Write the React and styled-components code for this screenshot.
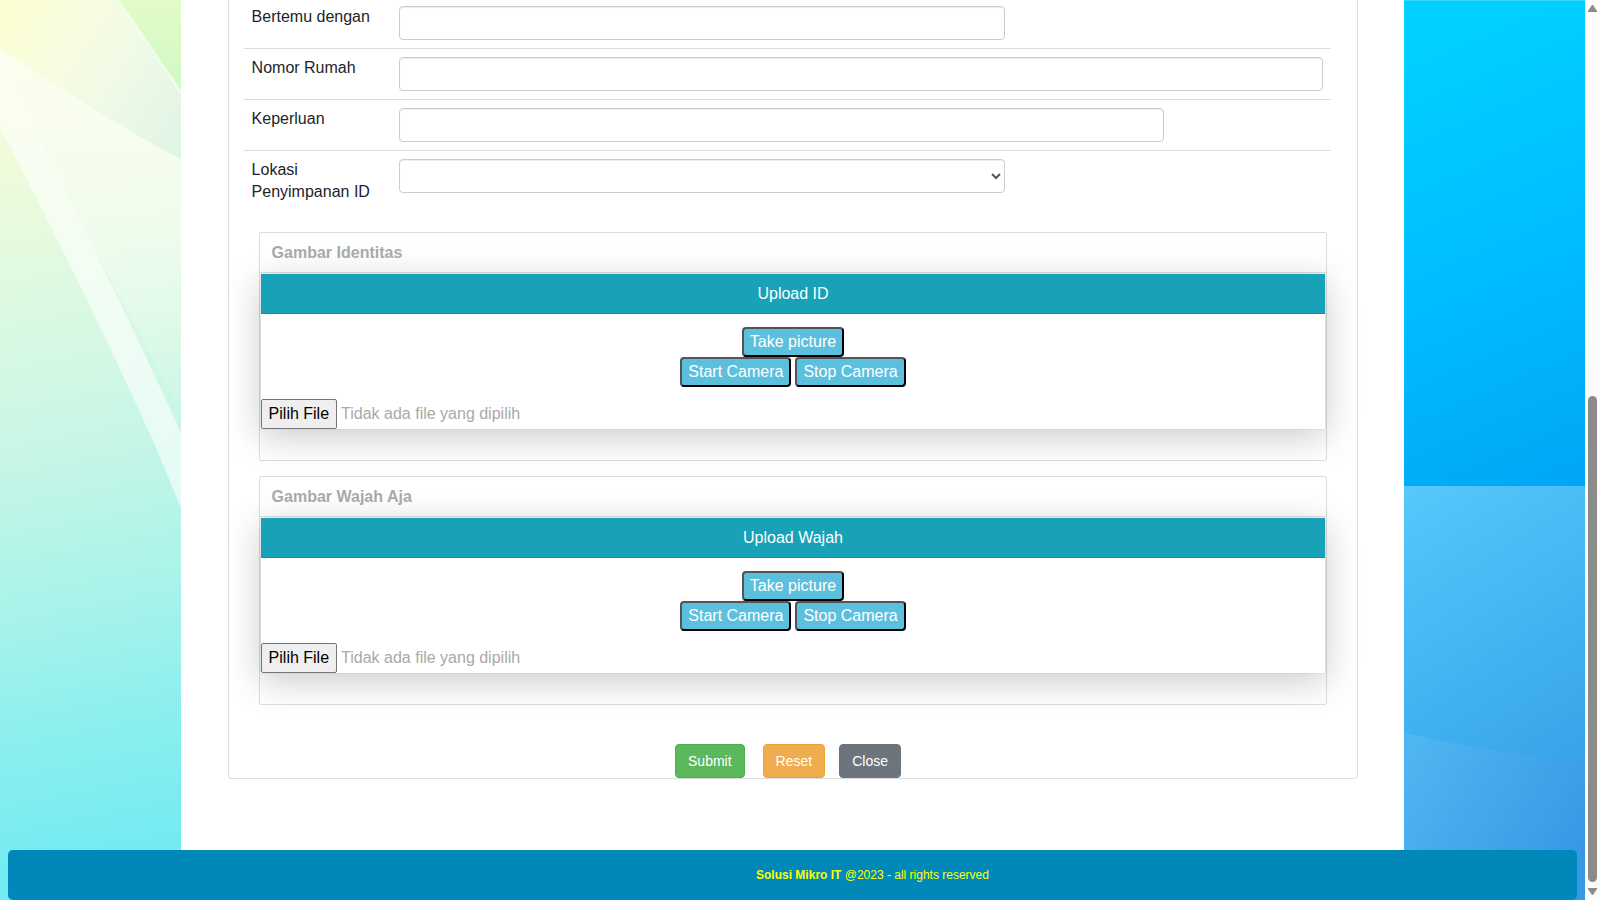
import React from "react";
import styled, { createGlobalStyle } from "styled-components";

const GlobalStyle = createGlobalStyle`
  *, *::before, *::after {
    box-sizing: border-box;
  }
  body {
    margin: 0;
    font-family: "Liberation Sans", Arial, sans-serif;
    font-size: 16px;
    line-height: 22px;
    color: #212529;
  }
  button, input, select {
    font-family: inherit;
  }
`;

const Shell = styled.div`
  display: grid;
  grid-template-columns: minmax(0, 1fr) 15px;
  min-height: 100vh;
`;

const Backdrop = styled.svg`
  grid-area: 1 / 1;
  width: 100%;
  height: 100%;
  min-height: 0;
  contain: size;
`;

const Page = styled.div`
  grid-area: 1 / 1;
  z-index: 1;
  display: flex;
  flex-direction: column;
  padding: 0 8px;
`;

const Sheet = styled.main`
  flex: 1;
  width: 78%;
  margin: 0 auto;
  padding: 0 46px 71px 47px;
  background: #fff;
`;

const Panel = styled.form`
  border: 1px solid #ddd;
  border-top: 0;
  border-radius: 0 0 4px 4px;
`;

const Fields = styled.div`
  padding: 0 26px 0 15px;
`;

const Field = styled.div`
  display: grid;
  grid-template-columns: 131px 1fr;
  column-gap: 16px;
  padding: 8px;
  border-top: 1px solid #ddd;

  &:first-child {
    padding-top: 6px;
    border-top: 0;
  }
`;

const Row = styled.div`
  display: flex;
  margin: 0 -15px;
`;

const Col = styled.div`
  width: calc(100% * ${(props) => props.$span} / 12);
  padding: 0 15px;
`;

const Input = styled.input`
  display: block;
  width: 100%;
  height: 34px;
  padding: 6px 12px;
  font-size: 14px;
  color: #555;
  background: #fff;
  border: 1px solid #ccc;
  border-radius: 4px;
  box-shadow: inset 0 1px 1px rgba(0, 0, 0, 0.075);
`;

const Cards = styled.div`
  display: flex;
  flex-direction: column;
  gap: 15px;
  padding: 21px 30px 39px;
`;

const Card = styled.section`
  padding-bottom: 30px;
  border: 1px solid #ddd;
  border-radius: 2px;
  color: #a9a9a9;
`;

const CardTitle = styled.h3`
  margin: 0;
  padding: 9px 12px 8px;
  font-size: 16px;
  line-height: 22px;
  border-bottom: 1px solid #ddd;
`;

const Uploader = styled.div`
  border: 1px solid rgba(0, 0, 0, 0.04);
  border-radius: 2px;
  background: #fff;
  background-clip: padding-box;
  box-shadow: 0 8px 36px rgba(0, 0, 0, 0.2);
`;

const UploaderTitle = styled.div`
  padding: 9px 12px 8px;
  text-align: center;
  color: #fff;
  background: #17a2b8;
  border-bottom: 1px solid rgba(0, 0, 0, 0.12);
`;

const Camera = styled.div`
  display: flex;
  flex-direction: column;
  align-items: center;
  padding: 13px 0 12px;
`;

const CameraRow = styled.div`
  display: flex;
  gap: 4px;
`;

const CameraButton = styled.button`
  height: 30px;
  padding: 0 6px;
  font-size: 16px;
  line-height: 22px;
  color: #fff;
  background: #5bc0de;
  border: 2px outset #000;
  border-radius: 4px;
`;

const FileRow = styled.div`
  display: flex;
  align-items: center;
  gap: 4px;
`;

const FileInput = styled.input`
  position: absolute;
  width: 1px;
  height: 1px;
  overflow: hidden;
  opacity: 0;
`;

const FileButton = styled.label`
  padding: 3px 7px;
  color: #000;
  background: #efefef;
  border: 1px solid #767676;
  border-radius: 2px;
`;

const Actions = styled.div`
  display: flex;
  justify-content: center;
  gap: 14px;
  padding-right: 10px;
`;

const tones = {
  success: ["#5cb85c", "#4cae4c"],
  warning: ["#f0ad4e", "#eea236"],
  secondary: ["#6c757d", "#6c757d"],
};

const Button = styled.button`
  padding: 6px 12px;
  font-size: 14px;
  line-height: 20px;
  color: #fff;
  background: ${(props) => tones[props.$tone][0]};
  border: 1px solid ${(props) => tones[props.$tone][1]};
  border-radius: 4px;

  &:first-child {
    margin-right: 4px;
  }
`;

const Footer = styled.footer`
  height: 50px;
  padding: 14px 0 14px 160px;
  font-size: 12px;
  text-align: center;
  color: #ff0;
  background: #0088b8;
  border-radius: 5px;
`;

const Scroll = styled.div`
  display: flex;
  flex-direction: column;
  align-items: center;
  justify-content: space-between;
  padding: 5px 0;
  background: #fcfcfc;
`;

const Track = styled.div`
  flex: 1;
  display: flex;
  align-items: flex-end;
  padding: 6px 0;
`;

const Thumb = styled.div`
  width: 9px;
  height: calc(56% + 2px);
  border-radius: 5px;
  background: #8b8b8b;
`;

const fields = [
  { id: "bertemu", label: "Bertemu dengan", span: 8 },
  { id: "nomor", label: "Nomor Rumah", span: 12 },
  { id: "keperluan", label: "Keperluan", span: 10 },
  { id: "lokasi", label: "Lokasi Penyimpanan ID", span: 8, select: true },
];

const Wallpaper = () => (
  <Backdrop viewBox="0 0 1585 900" preserveAspectRatio="none" aria-hidden="true">
    <defs>
      <linearGradient id="mint" gradientUnits="userSpaceOnUse" x1="0" y1="30" x2="160" y2="850">
        <stop offset="0" stopColor="#fbfed8" />
        <stop offset="0.18" stopColor="#edfbdc" />
        <stop offset="0.35" stopColor="#daf9e2" />
        <stop offset="0.5" stopColor="#c8f6e6" />
        <stop offset="0.68" stopColor="#aaf3ea" />
        <stop offset="0.84" stopColor="#8cefee" />
        <stop offset="1" stopColor="#72ebf3" />
      </linearGradient>
      <linearGradient id="petal" gradientUnits="userSpaceOnUse" x1="0" y1="20" x2="180" y2="140">
        <stop offset="0" stopColor="#fbfed2" />
        <stop offset="0.3" stopColor="#f8fde0" />
        <stop offset="0.6" stopColor="#f0fae6" />
        <stop offset="1" stopColor="#e0f5e6" />
      </linearGradient>
      <linearGradient id="haze" x1="0" y1="0" x2="0" y2="1">
        <stop offset="0" stopColor="#fff" stopOpacity="0.6" />
        <stop offset="0.5" stopColor="#fff" stopOpacity="0.4" />
        <stop offset="1" stopColor="#fff" stopOpacity="0" />
      </linearGradient>
      <linearGradient id="leaf" x1="0" y1="0" x2="0" y2="1">
        <stop offset="0" stopColor="#e2fbc8" />
        <stop offset="1" stopColor="#cdf8c4" />
      </linearGradient>
      <linearGradient id="sky" gradientUnits="userSpaceOnUse" x1="1404" y1="60" x2="1585" y2="486">
        <stop offset="0" stopColor="#00d0ff" />
        <stop offset="0.5" stopColor="#00bcff" />
        <stop offset="1" stopColor="#00a6f4" />
      </linearGradient>
      <linearGradient id="sea" gradientUnits="userSpaceOnUse" x1="1404" y1="490" x2="1600" y2="800">
        <stop offset="0" stopColor="#56c8fb" />
        <stop offset="0.5" stopColor="#42b4f1" />
        <stop offset="1" stopColor="#369de7" />
      </linearGradient>
      <linearGradient id="wave" gradientUnits="userSpaceOnUse" x1="1404" y1="735" x2="1585" y2="850">
        <stop offset="0" stopColor="#50b8f1" />
        <stop offset="1" stopColor="#3798e6" />
      </linearGradient>
    </defs>
    <rect width="800" height="900" fill="url(#mint)" />
    <path d="M0 48 C60 88 125 130 190 164 V430 L100 260 L0 66 Z" fill="url(#haze)" />
    <path d="M0 0 H118 L190 108 V164 C125 130 60 88 0 48 Z" fill="url(#petal)" />
    <path d="M118 0 H190 V108 Z" fill="url(#leaf)" />
    <path d="M118 0 L190 106" fill="none" stroke="#f1fdec" strokeWidth="3" />
    <path d="M0 62 L17 97 Q100 255 190 452 V530 L157 450 Q90 300 0 127 Z" fill="#fff" opacity="0.6" />
    <rect x="800" width="785" height="486" fill="url(#sky)" />
    <rect x="800" width="785" height="1" fill="#34d8ff" />
    <rect x="800" y="486" width="785" height="414" fill="url(#sea)" />
    <path d="M1380 726 Q1480 754 1585 760 V900 H1380 Z" fill="url(#wave)" />
  </Backdrop>
);

const UploadCard = ({ id, title, heading }) => (
  <Card>
    <CardTitle>{title}</CardTitle>
    <Uploader>
      <UploaderTitle>{heading}</UploaderTitle>
      <Camera>
        <CameraButton type="button">Take picture</CameraButton>
        <CameraRow>
          <CameraButton type="button">Start Camera</CameraButton>
          <CameraButton type="button">Stop Camera</CameraButton>
        </CameraRow>
      </Camera>
      <FileRow>
        <FileInput type="file" id={id} />
        <FileButton htmlFor={id}>Pilih File</FileButton>
        <span>Tidak ada file yang dipilih</span>
      </FileRow>
    </Uploader>
  </Card>
);

const App = () => {
  return (
    <>
      <GlobalStyle />
      <Shell>
        <Wallpaper />
        <Page>
          <Sheet>
            <Panel onSubmit={(e) => e.preventDefault()}>
              <Fields>
                {fields.map(({ id, label, span, select }) => (
                  <Field key={id}>
                    <label htmlFor={id}>{label}</label>
                    <Row>
                      <Col $span={span}>
                        {select ? (
                          <Input as="select" id={id}>
                            <option value="" />
                          </Input>
                        ) : (
                          <Input type="text" id={id} />
                        )}
                      </Col>
                    </Row>
                  </Field>
                ))}
              </Fields>
              <Cards>
                <UploadCard id="file-id" title="Gambar Identitas" heading="Upload ID" />
                <UploadCard id="file-wajah" title="Gambar Wajah Aja" heading="Upload Wajah" />
              </Cards>
              <Actions>
                <Button type="submit" $tone="success">Submit</Button>
                <Button type="reset" $tone="warning">Reset</Button>
                <Button type="button" $tone="secondary">Close</Button>
              </Actions>
            </Panel>
          </Sheet>
          <Footer>
            <b>Solusi Mikro IT</b> @2023 - all rights reserved
          </Footer>
        </Page>
        <Scroll aria-hidden="true">
          <svg width="9" height="7" viewBox="0 0 9 7">
            <path d="M4 0 H5 L9 6 V7 H0 V6 Z" fill="#8b8b8b" />
          </svg>
          <Track>
            <Thumb />
          </Track>
          <svg width="9" height="7" viewBox="0 0 9 7">
            <path d="M0 0 H9 V1 L5 7 H4 L0 1 Z" fill="#8b8b8b" />
          </svg>
        </Scroll>
      </Shell>
    </>
  );
};

export default App;
